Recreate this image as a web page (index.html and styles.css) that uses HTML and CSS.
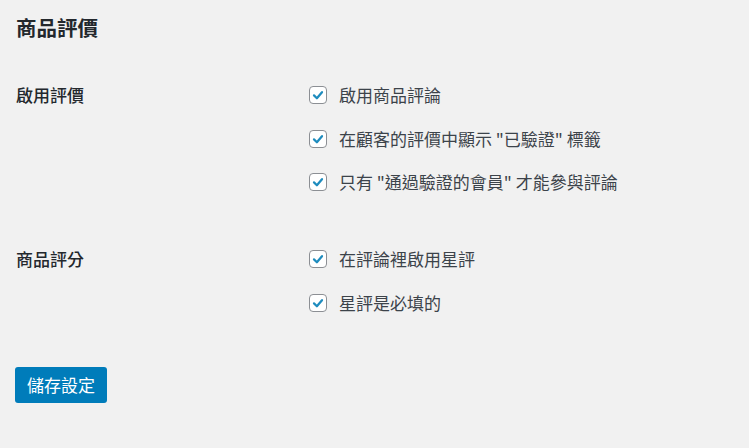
FILE: index.html
```html
<!DOCTYPE html>
<html>
<head>
  <title>商品評價</title>
  <link rel="stylesheet" href="styles.css">
</head>
<body>
  <h2 class="page-title">商品評價</h2>

  <div class="form-table">
    <div class="form-row">
      <div class="row-label">啟用評價</div>
      <div class="row-options">
        <label class="option">
          <span class="checkbox"><svg viewBox="0 0 20 20"><path d="M5 10.5 L8.6 14 L15 6.5"/></svg></span>
          啟用商品評論
        </label>
        <label class="option">
          <span class="checkbox"><svg viewBox="0 0 20 20"><path d="M5 10.5 L8.6 14 L15 6.5"/></svg></span>
          在顧客的評價中顯示 "已驗證" 標籤
        </label>
        <label class="option">
          <span class="checkbox"><svg viewBox="0 0 20 20"><path d="M5 10.5 L8.6 14 L15 6.5"/></svg></span>
          只有 "通過驗證的會員" 才能參與評論
        </label>
      </div>
    </div>

    <div class="form-row">
      <div class="row-label">商品評分</div>
      <div class="row-options">
        <label class="option">
          <span class="checkbox"><svg viewBox="0 0 20 20"><path d="M5 10.5 L8.6 14 L15 6.5"/></svg></span>
          在評論裡啟用星評
        </label>
        <label class="option">
          <span class="checkbox"><svg viewBox="0 0 20 20"><path d="M5 10.5 L8.6 14 L15 6.5"/></svg></span>
          星評是必填的
        </label>
      </div>
    </div>
  </div>

  <div class="submit">
    <button class="button-primary">儲存設定</button>
  </div>
</body>
</html>
```

FILE: styles.css
```css
body {
  font-family: 'Noto Sans CJK TC', 'Noto Sans', sans-serif;
  margin: 0;
  padding: 13px 16px 0 16px;
  background: #f1f1f1;
  color: #3c434a;
  font-size: 17px;
}

.page-title {
  margin: 0;
  font-size: 20.5px;
  line-height: 28px;
  font-weight: 600;
  color: #23282d;
}

.form-table {
  display: flex;
  flex-direction: column;
  gap: 53px;
  margin-top: 42px;
}

.form-row {
  display: flex;
}

.row-label {
  width: 293px;
  flex-shrink: 0;
  font-weight: 500;
  line-height: 24px;
  color: #23282d;
}

.row-options {
  display: flex;
  flex-direction: column;
  gap: 19.5px;
}

.option {
  display: flex;
  align-items: center;
  gap: 12px;
  line-height: 24px;
  height: 24px;
}

.checkbox {
  width: 16px;
  height: 16px;
  border: 1px solid #8c8f94;
  border-radius: 4px;
  background: #fff;
  display: flex;
  align-items: center;
  justify-content: center;
}

.checkbox svg {
  width: 16px;
  height: 16px;
  fill: none;
  stroke: #1e8cbe;
  stroke-width: 2.8;
  stroke-linecap: round;
  stroke-linejoin: round;
}

.submit {
  margin-top: 52px;
}

.button-primary {
  font-family: inherit;
  font-size: 17px;
  height: 36px;
  margin-left: -1px;
  padding: 0 12px;
  background: #007cba;
  color: #fff;
  border: none;
  border-radius: 3px;
  cursor: pointer;
}
```
